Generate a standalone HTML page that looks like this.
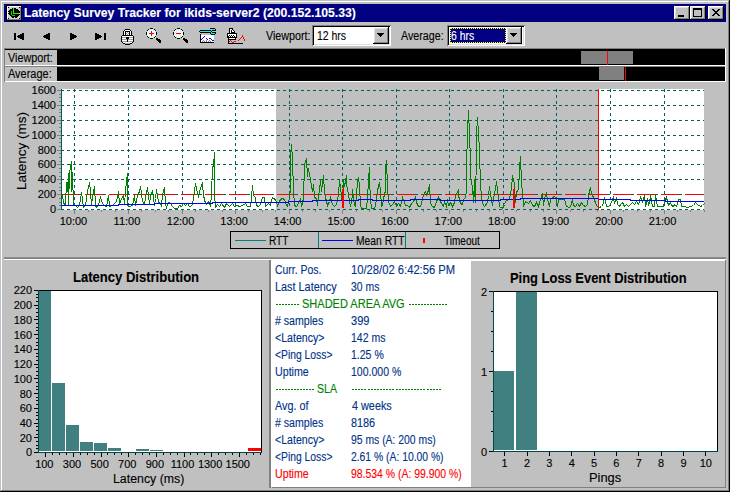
<!DOCTYPE html><html><head><meta charset="utf-8"><style>html,body{margin:0;padding:0;width:730px;height:492px;overflow:hidden;background:#c0c0c0;}body{position:relative;font-family:"Liberation Sans",sans-serif;}body>div,body>svg{position:absolute;}.t{white-space:nowrap;-webkit-text-stroke:0.12px currentColor;}svg{shape-rendering:crispEdges;}</style></head><body><div style="left:0px;top:0px;width:730px;height:492px;background:#c0c0c0;"></div>
<div style="left:1px;top:1px;width:728px;height:1px;background:#fff;"></div>
<div style="left:1px;top:1px;width:1px;height:490px;background:#fff;"></div>
<div style="left:0px;top:491px;width:730px;height:1px;background:#000;"></div>
<div style="left:729px;top:0px;width:1px;height:492px;background:#000;"></div>
<div style="left:1px;top:490px;width:728px;height:1px;background:#808080;"></div>
<div style="left:728px;top:1px;width:1px;height:490px;background:#808080;"></div>
<div style="left:4px;top:4px;width:722px;height:18px;background:#000080;"></div>
<svg style="left:6px;top:5px;" width="16" height="16" viewBox="0 0 16 16"><rect x="0" y="0" width="16" height="1" fill="#000"/><rect x="0" y="1" width="1" height="1" fill="#000"/><rect x="1" y="1" width="14" height="1" fill="#ffffff"/><rect x="15" y="1" width="1" height="1" fill="#000"/><rect x="0" y="2" width="1" height="1" fill="#000"/><rect x="1" y="2" width="1" height="1" fill="#ffffff"/><rect x="2" y="2" width="1" height="1" fill="#000"/><rect x="3" y="2" width="10" height="1" fill="#d0d0d0"/><rect x="13" y="2" width="1" height="1" fill="#000"/><rect x="14" y="2" width="1" height="1" fill="#808080"/><rect x="15" y="2" width="1" height="1" fill="#000"/><rect x="0" y="3" width="1" height="1" fill="#000"/><rect x="1" y="3" width="1" height="1" fill="#ffffff"/><rect x="2" y="3" width="4" height="1" fill="#d0d0d0"/><rect x="6" y="3" width="4" height="1" fill="#000"/><rect x="10" y="3" width="4" height="1" fill="#d0d0d0"/><rect x="14" y="3" width="1" height="1" fill="#808080"/><rect x="15" y="3" width="1" height="1" fill="#000"/><rect x="0" y="4" width="1" height="1" fill="#000"/><rect x="1" y="4" width="1" height="1" fill="#ffffff"/><rect x="2" y="4" width="2" height="1" fill="#d0d0d0"/><rect x="4" y="4" width="8" height="1" fill="#000"/><rect x="12" y="4" width="2" height="1" fill="#d0d0d0"/><rect x="14" y="4" width="1" height="1" fill="#808080"/><rect x="15" y="4" width="1" height="1" fill="#000"/><rect x="0" y="5" width="1" height="1" fill="#000"/><rect x="1" y="5" width="1" height="1" fill="#ffffff"/><rect x="2" y="5" width="1" height="1" fill="#d0d0d0"/><rect x="3" y="5" width="10" height="1" fill="#000"/><rect x="13" y="5" width="1" height="1" fill="#d0d0d0"/><rect x="14" y="5" width="1" height="1" fill="#808080"/><rect x="15" y="5" width="1" height="1" fill="#000"/><rect x="0" y="6" width="1" height="1" fill="#000"/><rect x="1" y="6" width="1" height="1" fill="#ffffff"/><rect x="2" y="6" width="12" height="1" fill="#000"/><rect x="14" y="6" width="1" height="1" fill="#808080"/><rect x="15" y="6" width="1" height="1" fill="#000"/><rect x="0" y="7" width="1" height="1" fill="#000"/><rect x="1" y="7" width="1" height="1" fill="#ffffff"/><rect x="2" y="7" width="1" height="1" fill="#d0d0d0"/><rect x="3" y="7" width="11" height="1" fill="#000"/><rect x="14" y="7" width="1" height="1" fill="#808080"/><rect x="15" y="7" width="1" height="1" fill="#000"/><rect x="0" y="8" width="1" height="1" fill="#000"/><rect x="1" y="8" width="1" height="1" fill="#ffffff"/><rect x="2" y="8" width="11" height="1" fill="#000"/><rect x="13" y="8" width="1" height="1" fill="#d0d0d0"/><rect x="14" y="8" width="1" height="1" fill="#808080"/><rect x="15" y="8" width="1" height="1" fill="#000"/><rect x="0" y="9" width="1" height="1" fill="#000"/><rect x="1" y="9" width="1" height="1" fill="#ffffff"/><rect x="2" y="9" width="1" height="1" fill="#d0d0d0"/><rect x="3" y="9" width="11" height="1" fill="#000"/><rect x="14" y="9" width="1" height="1" fill="#808080"/><rect x="15" y="9" width="1" height="1" fill="#000"/><rect x="0" y="10" width="1" height="1" fill="#000"/><rect x="1" y="10" width="1" height="1" fill="#ffffff"/><rect x="2" y="10" width="2" height="1" fill="#d0d0d0"/><rect x="4" y="10" width="9" height="1" fill="#000"/><rect x="13" y="10" width="1" height="1" fill="#d0d0d0"/><rect x="14" y="10" width="1" height="1" fill="#808080"/><rect x="15" y="10" width="1" height="1" fill="#000"/><rect x="0" y="11" width="1" height="1" fill="#000"/><rect x="1" y="11" width="1" height="1" fill="#ffffff"/><rect x="2" y="11" width="3" height="1" fill="#d0d0d0"/><rect x="5" y="11" width="7" height="1" fill="#000"/><rect x="12" y="11" width="2" height="1" fill="#d0d0d0"/><rect x="14" y="11" width="1" height="1" fill="#808080"/><rect x="15" y="11" width="1" height="1" fill="#000"/><rect x="0" y="12" width="1" height="1" fill="#000"/><rect x="1" y="12" width="1" height="1" fill="#ffffff"/><rect x="2" y="12" width="4" height="1" fill="#d0d0d0"/><rect x="6" y="12" width="2" height="1" fill="#000"/><rect x="8" y="12" width="1" height="1" fill="#d0d0d0"/><rect x="9" y="12" width="2" height="1" fill="#000"/><rect x="11" y="12" width="3" height="1" fill="#d0d0d0"/><rect x="14" y="12" width="1" height="1" fill="#808080"/><rect x="15" y="12" width="1" height="1" fill="#000"/><rect x="0" y="13" width="1" height="1" fill="#000"/><rect x="1" y="13" width="1" height="1" fill="#ffffff"/><rect x="2" y="13" width="1" height="1" fill="#000"/><rect x="3" y="13" width="10" height="1" fill="#d0d0d0"/><rect x="13" y="13" width="1" height="1" fill="#000"/><rect x="14" y="13" width="1" height="1" fill="#808080"/><rect x="15" y="13" width="1" height="1" fill="#000"/><rect x="0" y="14" width="1" height="1" fill="#000"/><rect x="1" y="14" width="14" height="1" fill="#808080"/><rect x="15" y="14" width="1" height="1" fill="#000"/><rect x="0" y="15" width="16" height="1" fill="#000"/><rect x="7" y="3" width="1" height="6" fill="#00ff00"/><rect x="7" y="8" width="6" height="1" fill="#00ff00"/><rect x="5" y="6" width="1" height="4" fill="#00d000"/><rect x="6" y="10" width="3" height="1" fill="#00d000"/></svg>
<div class="t" style="top:6.00px;font-size:12px;line-height:14px;color:#fff;font-weight:bold;left:24.18px;transform:scaleX(1.0175);transform-origin:0 0;">Latency Survey Tracker for ikids-server2 (200.152.105.33)</div>
<div style="left:674px;top:6px;width:16px;height:14px;background:#c0c0c0;box-shadow:inset -1px -1px #000,inset 1px 1px #fff,inset -2px -2px #808080,inset 2px 2px #dfdfdf;"></div>
<div style="left:690px;top:6px;width:16px;height:14px;background:#c0c0c0;box-shadow:inset -1px -1px #000,inset 1px 1px #fff,inset -2px -2px #808080,inset 2px 2px #dfdfdf;"></div>
<div style="left:708px;top:6px;width:16px;height:14px;background:#c0c0c0;box-shadow:inset -1px -1px #000,inset 1px 1px #fff,inset -2px -2px #808080,inset 2px 2px #dfdfdf;"></div>
<div style="left:678px;top:15px;width:6px;height:2px;background:#000;"></div>
<div style="left:693px;top:8px;width:9px;height:9px;background:transparent;box-shadow:inset 0 2px #000,inset 1px 0 #000,inset -1px 0 #000,inset 0 -1px #000;"></div>
<svg style="left:708px;top:6px;" width="16" height="14" viewBox="0 0 16 14"><rect x="4" y="3" width="2" height="1" fill="#000"/><rect x="10" y="3" width="2" height="1" fill="#000"/><rect x="5" y="4" width="2" height="1" fill="#000"/><rect x="9" y="4" width="2" height="1" fill="#000"/><rect x="6" y="5" width="4" height="1" fill="#000"/><rect x="7" y="6" width="2" height="1" fill="#000"/><rect x="6" y="7" width="4" height="1" fill="#000"/><rect x="5" y="8" width="2" height="1" fill="#000"/><rect x="9" y="8" width="2" height="1" fill="#000"/><rect x="4" y="9" width="2" height="1" fill="#000"/><rect x="10" y="9" width="2" height="1" fill="#000"/></svg>
<svg style="left:0px;top:0px;" width="260" height="48" viewBox="0 0 260 48"><rect x="14" y="33" width="2" height="7" fill="#000"/><rect x="17" y="36" width="1" height="1" fill="#000"/><rect x="18" y="35" width="2" height="3" fill="#000"/><rect x="20" y="34" width="2" height="5" fill="#000"/><rect x="22" y="33" width="2" height="7" fill="#000"/><rect x="43" y="36" width="1" height="1" fill="#000"/><rect x="44" y="35" width="2" height="3" fill="#000"/><rect x="46" y="34" width="2" height="5" fill="#000"/><rect x="48" y="33" width="2" height="7" fill="#000"/><rect x="70" y="33" width="2" height="7" fill="#000"/><rect x="72" y="34" width="2" height="5" fill="#000"/><rect x="74" y="35" width="2" height="3" fill="#000"/><rect x="76" y="36" width="1" height="1" fill="#000"/><rect x="95" y="33" width="2" height="7" fill="#000"/><rect x="97" y="34" width="2" height="5" fill="#000"/><rect x="99" y="35" width="2" height="3" fill="#000"/><rect x="101" y="36" width="1" height="1" fill="#000"/><rect x="104" y="33" width="2" height="7" fill="#000"/><rect x="125" y="29" width="5" height="1" fill="#000"/><rect x="124" y="30" width="1" height="1" fill="#000"/><rect x="125" y="30" width="5" height="1" fill="#fff"/><rect x="130" y="30" width="1" height="1" fill="#000"/><rect x="123" y="31" width="1" height="1" fill="#000"/><rect x="124" y="31" width="1" height="1" fill="#fff"/><rect x="125" y="31" width="5" height="1" fill="#000"/><rect x="130" y="31" width="1" height="1" fill="#fff"/><rect x="131" y="31" width="1" height="1" fill="#000"/><rect x="123" y="32" width="1" height="1" fill="#000"/><rect x="124" y="32" width="1" height="1" fill="#fff"/><rect x="125" y="32" width="1" height="1" fill="#000"/><rect x="126" y="32" width="1" height="1" fill="#fff"/><rect x="127" y="32" width="1" height="1" fill="#a0a0a0"/><rect x="128" y="32" width="1" height="1" fill="#fff"/><rect x="129" y="32" width="1" height="1" fill="#000"/><rect x="130" y="32" width="1" height="1" fill="#fff"/><rect x="131" y="32" width="1" height="1" fill="#000"/><rect x="123" y="33" width="1" height="1" fill="#000"/><rect x="124" y="33" width="1" height="1" fill="#fff"/><rect x="125" y="33" width="1" height="1" fill="#000"/><rect x="126" y="33" width="1" height="1" fill="#a0a0a0"/><rect x="127" y="33" width="1" height="1" fill="#fff"/><rect x="128" y="33" width="1" height="1" fill="#a0a0a0"/><rect x="129" y="33" width="1" height="1" fill="#000"/><rect x="130" y="33" width="1" height="1" fill="#fff"/><rect x="131" y="33" width="1" height="1" fill="#000"/><rect x="123" y="34" width="1" height="1" fill="#000"/><rect x="124" y="34" width="1" height="1" fill="#fff"/><rect x="125" y="34" width="1" height="1" fill="#000"/><rect x="126" y="34" width="1" height="1" fill="#fff"/><rect x="127" y="34" width="1" height="1" fill="#a0a0a0"/><rect x="128" y="34" width="1" height="1" fill="#fff"/><rect x="129" y="34" width="1" height="1" fill="#000"/><rect x="130" y="34" width="1" height="1" fill="#fff"/><rect x="131" y="34" width="1" height="1" fill="#000"/><rect x="122" y="35" width="11" height="1" fill="#000"/><rect x="121" y="36" width="1" height="1" fill="#000"/><rect x="122" y="36" width="11" height="1" fill="#fff"/><rect x="133" y="36" width="1" height="1" fill="#000"/><rect x="121" y="37" width="1" height="1" fill="#000"/><rect x="122" y="37" width="4" height="1" fill="#a0a0a0"/><rect x="126" y="37" width="3" height="1" fill="#000"/><rect x="129" y="37" width="4" height="1" fill="#a0a0a0"/><rect x="133" y="37" width="1" height="1" fill="#000"/><rect x="121" y="38" width="1" height="1" fill="#000"/><rect x="122" y="38" width="4" height="1" fill="#fff"/><rect x="126" y="38" width="3" height="1" fill="#000"/><rect x="129" y="38" width="4" height="1" fill="#fff"/><rect x="133" y="38" width="1" height="1" fill="#000"/><rect x="121" y="39" width="1" height="1" fill="#000"/><rect x="122" y="39" width="5" height="1" fill="#a0a0a0"/><rect x="127" y="39" width="1" height="1" fill="#000"/><rect x="128" y="39" width="5" height="1" fill="#a0a0a0"/><rect x="133" y="39" width="1" height="1" fill="#000"/><rect x="121" y="40" width="1" height="1" fill="#000"/><rect x="122" y="40" width="5" height="1" fill="#fff"/><rect x="127" y="40" width="1" height="1" fill="#000"/><rect x="128" y="40" width="5" height="1" fill="#fff"/><rect x="133" y="40" width="1" height="1" fill="#000"/><rect x="121" y="41" width="1" height="1" fill="#000"/><rect x="122" y="41" width="5" height="1" fill="#a0a0a0"/><rect x="127" y="41" width="1" height="1" fill="#000"/><rect x="128" y="41" width="5" height="1" fill="#a0a0a0"/><rect x="133" y="41" width="1" height="1" fill="#000"/><rect x="122" y="42" width="1" height="1" fill="#000"/><rect x="123" y="42" width="9" height="1" fill="#fff"/><rect x="132" y="42" width="1" height="1" fill="#000"/><rect x="123" y="43" width="2" height="1" fill="#000"/><rect x="125" y="43" width="5" height="1" fill="#a0a0a0"/><rect x="130" y="43" width="2" height="1" fill="#000"/><rect x="125" y="44" width="5" height="1" fill="#000"/><rect x="150" y="28" width="3" height="1" fill="#000"/><rect x="148" y="29" width="1" height="1" fill="#000"/><rect x="150" y="29" width="1" height="1" fill="#fff"/><rect x="151" y="29" width="1" height="1" fill="#c8f8f8"/><rect x="152" y="29" width="1" height="1" fill="#fff"/><rect x="154" y="29" width="1" height="1" fill="#000"/><rect x="147" y="30" width="1" height="1" fill="#000"/><rect x="148" y="30" width="1" height="1" fill="#fff"/><rect x="149" y="30" width="1" height="1" fill="#c8f8f8"/><rect x="150" y="30" width="1" height="1" fill="#fff"/><rect x="151" y="30" width="1" height="1" fill="#c8f8f8"/><rect x="152" y="30" width="1" height="1" fill="#fff"/><rect x="153" y="30" width="1" height="1" fill="#c8f8f8"/><rect x="154" y="30" width="1" height="1" fill="#fff"/><rect x="155" y="30" width="1" height="1" fill="#000"/><rect x="147" y="31" width="1" height="1" fill="#c8f8f8"/><rect x="148" y="31" width="1" height="1" fill="#fff"/><rect x="149" y="31" width="1" height="1" fill="#c8f8f8"/><rect x="150" y="31" width="1" height="1" fill="#fff"/><rect x="151" y="31" width="1" height="1" fill="#ff0000"/><rect x="152" y="31" width="1" height="1" fill="#fff"/><rect x="153" y="31" width="1" height="1" fill="#c8f8f8"/><rect x="154" y="31" width="1" height="1" fill="#fff"/><rect x="155" y="31" width="1" height="1" fill="#c8f8f8"/><rect x="146" y="32" width="1" height="1" fill="#000"/><rect x="147" y="32" width="1" height="1" fill="#fff"/><rect x="148" y="32" width="1" height="1" fill="#c8f8f8"/><rect x="149" y="32" width="1" height="1" fill="#fff"/><rect x="150" y="32" width="1" height="1" fill="#c8f8f8"/><rect x="151" y="32" width="1" height="1" fill="#ff0000"/><rect x="152" y="32" width="1" height="1" fill="#c8f8f8"/><rect x="153" y="32" width="1" height="1" fill="#fff"/><rect x="154" y="32" width="1" height="1" fill="#c8f8f8"/><rect x="155" y="32" width="1" height="1" fill="#fff"/><rect x="156" y="32" width="1" height="1" fill="#000"/><rect x="146" y="33" width="1" height="1" fill="#000"/><rect x="147" y="33" width="1" height="1" fill="#c8f8f8"/><rect x="148" y="33" width="1" height="1" fill="#fff"/><rect x="149" y="33" width="5" height="1" fill="#ff0000"/><rect x="154" y="33" width="1" height="1" fill="#fff"/><rect x="155" y="33" width="1" height="1" fill="#c8f8f8"/><rect x="156" y="33" width="1" height="1" fill="#000"/><rect x="146" y="34" width="1" height="1" fill="#000"/><rect x="147" y="34" width="1" height="1" fill="#fff"/><rect x="148" y="34" width="1" height="1" fill="#c8f8f8"/><rect x="149" y="34" width="1" height="1" fill="#fff"/><rect x="150" y="34" width="1" height="1" fill="#c8f8f8"/><rect x="151" y="34" width="1" height="1" fill="#ff0000"/><rect x="152" y="34" width="1" height="1" fill="#c8f8f8"/><rect x="153" y="34" width="1" height="1" fill="#fff"/><rect x="154" y="34" width="1" height="1" fill="#c8f8f8"/><rect x="155" y="34" width="1" height="1" fill="#fff"/><rect x="156" y="34" width="1" height="1" fill="#000"/><rect x="147" y="35" width="1" height="1" fill="#c8f8f8"/><rect x="148" y="35" width="1" height="1" fill="#fff"/><rect x="149" y="35" width="1" height="1" fill="#c8f8f8"/><rect x="150" y="35" width="1" height="1" fill="#fff"/><rect x="151" y="35" width="1" height="1" fill="#ff0000"/><rect x="152" y="35" width="1" height="1" fill="#fff"/><rect x="153" y="35" width="1" height="1" fill="#c8f8f8"/><rect x="154" y="35" width="1" height="1" fill="#fff"/><rect x="155" y="35" width="1" height="1" fill="#c8f8f8"/><rect x="147" y="36" width="1" height="1" fill="#000"/><rect x="148" y="36" width="1" height="1" fill="#fff"/><rect x="149" y="36" width="1" height="1" fill="#c8f8f8"/><rect x="150" y="36" width="1" height="1" fill="#fff"/><rect x="151" y="36" width="1" height="1" fill="#c8f8f8"/><rect x="152" y="36" width="1" height="1" fill="#fff"/><rect x="153" y="36" width="1" height="1" fill="#c8f8f8"/><rect x="154" y="36" width="1" height="1" fill="#fff"/><rect x="155" y="36" width="1" height="1" fill="#000"/><rect x="148" y="37" width="1" height="1" fill="#000"/><rect x="150" y="37" width="1" height="1" fill="#fff"/><rect x="151" y="37" width="1" height="1" fill="#c8f8f8"/><rect x="152" y="37" width="1" height="1" fill="#fff"/><rect x="154" y="37" width="1" height="1" fill="#000"/><rect x="155" y="37" width="1" height="1" fill="#ffff00"/><rect x="150" y="38" width="3" height="1" fill="#000"/><rect x="155" y="38" width="1" height="1" fill="#ffff00"/><rect x="156" y="38" width="2" height="1" fill="#000"/><rect x="156" y="39" width="4" height="1" fill="#000"/><rect x="157" y="40" width="4" height="1" fill="#000"/><rect x="158" y="41" width="3" height="1" fill="#000"/><rect x="159" y="42" width="2" height="1" fill="#000"/><rect x="177" y="28" width="3" height="1" fill="#000"/><rect x="175" y="29" width="1" height="1" fill="#000"/><rect x="177" y="29" width="1" height="1" fill="#fff"/><rect x="178" y="29" width="1" height="1" fill="#c8f8f8"/><rect x="179" y="29" width="1" height="1" fill="#fff"/><rect x="181" y="29" width="1" height="1" fill="#000"/><rect x="174" y="30" width="1" height="1" fill="#000"/><rect x="175" y="30" width="1" height="1" fill="#fff"/><rect x="176" y="30" width="1" height="1" fill="#c8f8f8"/><rect x="177" y="30" width="1" height="1" fill="#fff"/><rect x="178" y="30" width="1" height="1" fill="#c8f8f8"/><rect x="179" y="30" width="1" height="1" fill="#fff"/><rect x="180" y="30" width="1" height="1" fill="#c8f8f8"/><rect x="181" y="30" width="1" height="1" fill="#fff"/><rect x="182" y="30" width="1" height="1" fill="#000"/><rect x="174" y="31" width="1" height="1" fill="#c8f8f8"/><rect x="175" y="31" width="1" height="1" fill="#fff"/><rect x="176" y="31" width="1" height="1" fill="#c8f8f8"/><rect x="177" y="31" width="3" height="1" fill="#fff"/><rect x="180" y="31" width="1" height="1" fill="#c8f8f8"/><rect x="181" y="31" width="1" height="1" fill="#fff"/><rect x="182" y="31" width="1" height="1" fill="#c8f8f8"/><rect x="173" y="32" width="1" height="1" fill="#000"/><rect x="174" y="32" width="1" height="1" fill="#fff"/><rect x="175" y="32" width="1" height="1" fill="#c8f8f8"/><rect x="176" y="32" width="1" height="1" fill="#fff"/><rect x="177" y="32" width="1" height="1" fill="#c8f8f8"/><rect x="178" y="32" width="1" height="1" fill="#fff"/><rect x="179" y="32" width="1" height="1" fill="#c8f8f8"/><rect x="180" y="32" width="1" height="1" fill="#fff"/><rect x="181" y="32" width="1" height="1" fill="#c8f8f8"/><rect x="182" y="32" width="1" height="1" fill="#fff"/><rect x="183" y="32" width="1" height="1" fill="#000"/><rect x="173" y="33" width="1" height="1" fill="#000"/><rect x="174" y="33" width="1" height="1" fill="#c8f8f8"/><rect x="175" y="33" width="1" height="1" fill="#fff"/><rect x="176" y="33" width="5" height="1" fill="#ff0000"/><rect x="181" y="33" width="1" height="1" fill="#fff"/><rect x="182" y="33" width="1" height="1" fill="#c8f8f8"/><rect x="183" y="33" width="1" height="1" fill="#000"/><rect x="173" y="34" width="1" height="1" fill="#000"/><rect x="174" y="34" width="1" height="1" fill="#fff"/><rect x="175" y="34" width="1" height="1" fill="#c8f8f8"/><rect x="176" y="34" width="1" height="1" fill="#fff"/><rect x="177" y="34" width="1" height="1" fill="#c8f8f8"/><rect x="178" y="34" width="1" height="1" fill="#fff"/><rect x="179" y="34" width="1" height="1" fill="#c8f8f8"/><rect x="180" y="34" width="1" height="1" fill="#fff"/><rect x="181" y="34" width="1" height="1" fill="#c8f8f8"/><rect x="182" y="34" width="1" height="1" fill="#fff"/><rect x="183" y="34" width="1" height="1" fill="#000"/><rect x="174" y="35" width="1" height="1" fill="#c8f8f8"/><rect x="175" y="35" width="1" height="1" fill="#fff"/><rect x="176" y="35" width="1" height="1" fill="#c8f8f8"/><rect x="177" y="35" width="3" height="1" fill="#fff"/><rect x="180" y="35" width="1" height="1" fill="#c8f8f8"/><rect x="181" y="35" width="1" height="1" fill="#fff"/><rect x="182" y="35" width="1" height="1" fill="#c8f8f8"/><rect x="174" y="36" width="1" height="1" fill="#000"/><rect x="175" y="36" width="1" height="1" fill="#fff"/><rect x="176" y="36" width="1" height="1" fill="#c8f8f8"/><rect x="177" y="36" width="1" height="1" fill="#fff"/><rect x="178" y="36" width="1" height="1" fill="#c8f8f8"/><rect x="179" y="36" width="1" height="1" fill="#fff"/><rect x="180" y="36" width="1" height="1" fill="#c8f8f8"/><rect x="181" y="36" width="1" height="1" fill="#fff"/><rect x="182" y="36" width="1" height="1" fill="#000"/><rect x="175" y="37" width="1" height="1" fill="#000"/><rect x="177" y="37" width="1" height="1" fill="#fff"/><rect x="178" y="37" width="1" height="1" fill="#c8f8f8"/><rect x="179" y="37" width="1" height="1" fill="#fff"/><rect x="181" y="37" width="1" height="1" fill="#000"/><rect x="182" y="37" width="1" height="1" fill="#ffff00"/><rect x="177" y="38" width="3" height="1" fill="#000"/><rect x="182" y="38" width="1" height="1" fill="#ffff00"/><rect x="183" y="38" width="2" height="1" fill="#000"/><rect x="183" y="39" width="4" height="1" fill="#000"/><rect x="184" y="40" width="4" height="1" fill="#000"/><rect x="185" y="41" width="3" height="1" fill="#000"/><rect x="186" y="42" width="2" height="1" fill="#000"/><rect x="210" y="28" width="5" height="1" fill="#000"/><rect x="211" y="29" width="4" height="1" fill="#00ffff"/><rect x="215" y="29" width="1" height="1" fill="#000"/><rect x="200" y="30" width="11" height="1" fill="#000"/><rect x="211" y="30" width="1" height="1" fill="#00ffff"/><rect x="212" y="30" width="4" height="1" fill="#000"/><rect x="199" y="31" width="1" height="1" fill="#000"/><rect x="200" y="31" width="11" height="1" fill="#00ffff"/><rect x="211" y="31" width="1" height="1" fill="#000"/><rect x="200" y="32" width="11" height="1" fill="#000"/><rect x="211" y="32" width="1" height="1" fill="#00ffff"/><rect x="212" y="32" width="4" height="1" fill="#000"/><rect x="210" y="33" width="1" height="1" fill="#000"/><rect x="211" y="33" width="4" height="1" fill="#00ffff"/><rect x="215" y="33" width="1" height="1" fill="#000"/><rect x="200" y="34" width="1" height="1" fill="#000"/><rect x="211" y="34" width="4" height="1" fill="#000"/><rect x="200" y="35" width="1" height="1" fill="#000"/><rect x="201" y="35" width="13" height="1" fill="#fff"/><rect x="200" y="36" width="1" height="1" fill="#000"/><rect x="201" y="36" width="3" height="1" fill="#fff"/><rect x="204" y="36" width="1" height="1" fill="#0000ff"/><rect x="205" y="36" width="9" height="1" fill="#fff"/><rect x="200" y="37" width="1" height="1" fill="#000"/><rect x="201" y="37" width="2" height="1" fill="#fff"/><rect x="203" y="37" width="1" height="1" fill="#0000ff"/><rect x="204" y="37" width="10" height="1" fill="#fff"/><rect x="200" y="38" width="1" height="1" fill="#000"/><rect x="201" y="38" width="1" height="1" fill="#fff"/><rect x="202" y="38" width="1" height="1" fill="#0000ff"/><rect x="203" y="38" width="3" height="1" fill="#fff"/><rect x="206" y="38" width="1" height="1" fill="#0000ff"/><rect x="207" y="38" width="2" height="1" fill="#fff"/><rect x="209" y="38" width="2" height="1" fill="#0000ff"/><rect x="211" y="38" width="3" height="1" fill="#fff"/><rect x="200" y="39" width="1" height="1" fill="#000"/><rect x="201" y="39" width="1" height="1" fill="#0000ff"/><rect x="202" y="39" width="5" height="1" fill="#fff"/><rect x="207" y="39" width="1" height="1" fill="#0000ff"/><rect x="208" y="39" width="3" height="1" fill="#fff"/><rect x="211" y="39" width="1" height="1" fill="#0000ff"/><rect x="212" y="39" width="2" height="1" fill="#fff"/><rect x="200" y="40" width="1" height="1" fill="#000"/><rect x="201" y="40" width="2" height="1" fill="#fff"/><rect x="203" y="40" width="1" height="1" fill="#808080"/><rect x="204" y="40" width="2" height="1" fill="#fff"/><rect x="206" y="40" width="1" height="1" fill="#808080"/><rect x="207" y="40" width="2" height="1" fill="#fff"/><rect x="209" y="40" width="1" height="1" fill="#808080"/><rect x="210" y="40" width="2" height="1" fill="#fff"/><rect x="212" y="40" width="2" height="1" fill="#0000ff"/><rect x="200" y="41" width="1" height="1" fill="#000"/><rect x="201" y="41" width="1" height="1" fill="#fff"/><rect x="202" y="41" width="1" height="1" fill="#808080"/><rect x="203" y="41" width="1" height="1" fill="#fff"/><rect x="204" y="41" width="1" height="1" fill="#808080"/><rect x="205" y="41" width="1" height="1" fill="#fff"/><rect x="206" y="41" width="1" height="1" fill="#808080"/><rect x="207" y="41" width="1" height="1" fill="#fff"/><rect x="208" y="41" width="1" height="1" fill="#808080"/><rect x="209" y="41" width="1" height="1" fill="#fff"/><rect x="210" y="41" width="1" height="1" fill="#808080"/><rect x="211" y="41" width="3" height="1" fill="#fff"/><rect x="200" y="42" width="14" height="1" fill="#000"/><rect x="229" y="28" width="4" height="1" fill="#000"/><rect x="229" y="29" width="1" height="1" fill="#000"/><rect x="230" y="29" width="2" height="1" fill="#fff"/><rect x="232" y="29" width="1" height="1" fill="#000"/><rect x="229" y="30" width="1" height="1" fill="#000"/><rect x="230" y="30" width="1" height="1" fill="#fff"/><rect x="231" y="30" width="1" height="1" fill="#000"/><rect x="232" y="30" width="1" height="1" fill="#fff"/><rect x="233" y="30" width="1" height="1" fill="#000"/><rect x="229" y="31" width="1" height="1" fill="#000"/><rect x="230" y="31" width="1" height="1" fill="#fff"/><rect x="231" y="31" width="1" height="1" fill="#000"/><rect x="232" y="31" width="2" height="1" fill="#fff"/><rect x="234" y="31" width="1" height="1" fill="#000"/><rect x="229" y="32" width="1" height="1" fill="#000"/><rect x="230" y="32" width="1" height="1" fill="#fff"/><rect x="231" y="32" width="4" height="1" fill="#000"/><rect x="227" y="33" width="10" height="1" fill="#000"/><rect x="227" y="34" width="1" height="1" fill="#000"/><rect x="228" y="34" width="8" height="1" fill="#fff"/><rect x="236" y="34" width="1" height="1" fill="#000"/><rect x="227" y="35" width="1" height="1" fill="#000"/><rect x="228" y="35" width="1" height="1" fill="#fff"/><rect x="229" y="35" width="1" height="1" fill="#000"/><rect x="230" y="35" width="1" height="1" fill="#fff"/><rect x="231" y="35" width="1" height="1" fill="#000"/><rect x="232" y="35" width="1" height="1" fill="#fff"/><rect x="233" y="35" width="1" height="1" fill="#000"/><rect x="234" y="35" width="2" height="1" fill="#fff"/><rect x="236" y="35" width="1" height="1" fill="#000"/><rect x="242" y="35" width="1" height="1" fill="#ff0000"/><rect x="227" y="36" width="2" height="1" fill="#000"/><rect x="229" y="36" width="1" height="1" fill="#fff"/><rect x="230" y="36" width="1" height="1" fill="#000"/><rect x="231" y="36" width="1" height="1" fill="#fff"/><rect x="232" y="36" width="1" height="1" fill="#000"/><rect x="233" y="36" width="1" height="1" fill="#fff"/><rect x="234" y="36" width="1" height="1" fill="#000"/><rect x="235" y="36" width="1" height="1" fill="#fff"/><rect x="236" y="36" width="1" height="1" fill="#000"/><rect x="242" y="36" width="1" height="1" fill="#ff0000"/><rect x="227" y="37" width="10" height="1" fill="#000"/><rect x="241" y="37" width="1" height="1" fill="#ff0000"/><rect x="243" y="37" width="1" height="1" fill="#ff0000"/><rect x="228" y="38" width="1" height="1" fill="#000"/><rect x="229" y="38" width="6" height="1" fill="#fff"/><rect x="235" y="38" width="1" height="1" fill="#000"/><rect x="240" y="38" width="1" height="1" fill="#ff0000"/><rect x="243" y="38" width="1" height="1" fill="#ff0000"/><rect x="228" y="39" width="8" height="1" fill="#000"/><rect x="239" y="39" width="1" height="1" fill="#ff0000"/><rect x="244" y="39" width="1" height="1" fill="#ff0000"/><rect x="228" y="40" width="1" height="1" fill="#000"/><rect x="230" y="40" width="1" height="1" fill="#ff0000"/><rect x="238" y="40" width="1" height="1" fill="#ff0000"/><rect x="244" y="40" width="1" height="1" fill="#ff0000"/><rect x="228" y="41" width="1" height="1" fill="#000"/><rect x="229" y="41" width="1" height="1" fill="#ff0000"/><rect x="231" y="41" width="1" height="1" fill="#ff0000"/><rect x="234" y="41" width="2" height="1" fill="#ff0000"/><rect x="228" y="42" width="1" height="1" fill="#000"/><rect x="232" y="42" width="2" height="1" fill="#ff0000"/><rect x="228" y="43" width="15" height="1" fill="#000"/></svg>
<div class="t" style="top:29.00px;font-size:12px;line-height:14px;color:#000;font-weight:normal;left:265.75px;transform:scaleX(0.8940);transform-origin:0 0;">Viewport:</div>
<div style="left:312px;top:25px;width:79px;height:21px;background:#fff;box-shadow:inset 1px 1px #808080,inset -1px -1px #fff,inset 2px 2px #000,inset -2px -2px #dfdfdf;"></div>
<div class="t" style="top:29.00px;font-size:12px;line-height:14px;color:#000;font-weight:normal;left:317.12px;transform:scaleX(0.8708);transform-origin:0 0;">12 hrs</div>
<div style="left:373px;top:27px;width:16px;height:17px;background:#c0c0c0;box-shadow:inset -1px -1px #000,inset 1px 1px #fff,inset -2px -2px #808080,inset 2px 2px #dfdfdf;"></div>
<svg style="left:373px;top:27px;" width="16" height="17" viewBox="0 0 16 17"><path d="M4 6h7v1h-7zM5 7h5v1h-5zM6 8h3v1h-3zM7 9h1v1h-1z" fill="#000"/></svg>
<div class="t" style="top:29.00px;font-size:12px;line-height:14px;color:#000;font-weight:normal;left:400.97px;transform:scaleX(0.8927);transform-origin:0 0;">Average:</div>
<div style="left:447px;top:25px;width:78px;height:21px;background:#fff;box-shadow:inset 1px 1px #808080,inset -1px -1px #fff,inset 2px 2px #000,inset -2px -2px #dfdfdf;"></div>
<div style="left:450px;top:28px;width:56px;height:15px;background:#000080;outline:1px dotted #ffff00;outline-offset:-1px;"></div>
<div class="t" style="top:29.00px;font-size:12px;line-height:14px;color:#fff;font-weight:normal;left:451.48px;transform:scaleX(0.8655);transform-origin:0 0;">6 hrs</div>
<div style="left:506px;top:27px;width:16px;height:17px;background:#c0c0c0;box-shadow:inset -1px -1px #000,inset 1px 1px #fff,inset -2px -2px #808080,inset 2px 2px #dfdfdf;"></div>
<svg style="left:506px;top:27px;" width="16" height="17" viewBox="0 0 16 17"><path d="M4 6h7v1h-7zM5 7h5v1h-5zM6 8h3v1h-3zM7 9h1v1h-1z" fill="#000"/></svg>
<div style="left:4px;top:48px;width:722px;height:1px;background:#808080;"></div>
<div style="left:5px;top:49px;width:720px;height:1px;background:#000;"></div>
<div style="left:4px;top:48px;width:1px;height:34px;background:#808080;"></div>
<div style="left:57px;top:50px;width:668px;height:15px;background:#000;"></div>
<div style="left:5px;top:65px;width:721px;height:1px;background:#fff;"></div>
<div style="left:5px;top:66px;width:720px;height:1px;background:#808080;"></div>
<div style="left:57px;top:67px;width:668px;height:14px;background:#000;"></div>
<div style="left:5px;top:81px;width:721px;height:1px;background:#fff;"></div>
<div style="left:725px;top:48px;width:1px;height:34px;background:#fff;"></div>
<div class="t" style="top:51.00px;font-size:12px;line-height:14px;color:#000;font-weight:normal;left:7.65px;transform:scaleX(0.9001);transform-origin:0 0;">Viewport:</div>
<div class="t" style="top:67.00px;font-size:12px;line-height:14px;color:#000;font-weight:normal;left:7.67px;transform:scaleX(0.9142);transform-origin:0 0;">Average:</div>
<div style="left:581px;top:51px;width:52px;height:13px;background:#808080;"></div>
<div style="left:607px;top:51px;width:1px;height:14px;background:#ff0000;"></div>
<div style="left:599px;top:67px;width:25px;height:13px;background:#808080;"></div>
<div style="left:625px;top:67px;width:1px;height:14px;background:#ff0000;"></div>
<svg style="left:0px;top:0px" width="730" height="260" viewBox="0 0 730 260"><rect x="61" y="89" width="643" height="121" fill="#fff"/><rect x="276" y="89" width="323" height="121" fill="#c0c0c0"/><line x1="61" y1="194.5" x2="704" y2="194.5" stroke="#006060" stroke-dasharray="3 3"/><line x1="61" y1="179.5" x2="704" y2="179.5" stroke="#006060" stroke-dasharray="3 3"/><line x1="61" y1="164.5" x2="704" y2="164.5" stroke="#006060" stroke-dasharray="3 3"/><line x1="61" y1="150.5" x2="704" y2="150.5" stroke="#006060" stroke-dasharray="3 3"/><line x1="61" y1="135.5" x2="704" y2="135.5" stroke="#006060" stroke-dasharray="3 3"/><line x1="61" y1="120.5" x2="704" y2="120.5" stroke="#006060" stroke-dasharray="3 3"/><line x1="61" y1="105.5" x2="704" y2="105.5" stroke="#006060" stroke-dasharray="3 3"/><line x1="61" y1="90.5" x2="704" y2="90.5" stroke="#006060" stroke-dasharray="3 3"/><line x1="74.5" y1="89" x2="74.5" y2="209" stroke="#006060" stroke-dasharray="3 3"/><line x1="128.5" y1="89" x2="128.5" y2="209" stroke="#006060" stroke-dasharray="3 3"/><line x1="182.5" y1="89" x2="182.5" y2="209" stroke="#006060" stroke-dasharray="3 3"/><line x1="235.5" y1="89" x2="235.5" y2="209" stroke="#006060" stroke-dasharray="3 3"/><line x1="289.5" y1="89" x2="289.5" y2="209" stroke="#006060" stroke-dasharray="3 3"/><line x1="342.5" y1="89" x2="342.5" y2="209" stroke="#006060" stroke-dasharray="3 3"/><line x1="396.5" y1="89" x2="396.5" y2="209" stroke="#006060" stroke-dasharray="3 3"/><line x1="449.5" y1="89" x2="449.5" y2="209" stroke="#006060" stroke-dasharray="3 3"/><line x1="503.5" y1="89" x2="503.5" y2="209" stroke="#006060" stroke-dasharray="3 3"/><line x1="556.5" y1="89" x2="556.5" y2="209" stroke="#006060" stroke-dasharray="3 3"/><line x1="610.5" y1="89" x2="610.5" y2="209" stroke="#006060" stroke-dasharray="3 3"/><line x1="664.5" y1="89" x2="664.5" y2="209" stroke="#006060" stroke-dasharray="3 3"/><line x1="61" y1="209.5" x2="704" y2="209.5" stroke="#006060" stroke-dasharray="3 3"/><rect x="61" y="89" width="1" height="121" fill="#006060"/><rect x="57" y="209" width="4" height="1" fill="#808080"/><rect x="59" y="205" width="2" height="1" fill="#808080"/><rect x="59" y="202" width="2" height="1" fill="#808080"/><rect x="59" y="198" width="2" height="1" fill="#808080"/><rect x="57" y="194" width="4" height="1" fill="#808080"/><rect x="59" y="190" width="2" height="1" fill="#808080"/><rect x="59" y="187" width="2" height="1" fill="#808080"/><rect x="59" y="183" width="2" height="1" fill="#808080"/><rect x="57" y="179" width="4" height="1" fill="#808080"/><rect x="59" y="176" width="2" height="1" fill="#808080"/><rect x="59" y="172" width="2" height="1" fill="#808080"/><rect x="59" y="168" width="2" height="1" fill="#808080"/><rect x="57" y="164" width="4" height="1" fill="#808080"/><rect x="59" y="161" width="2" height="1" fill="#808080"/><rect x="59" y="157" width="2" height="1" fill="#808080"/><rect x="59" y="153" width="2" height="1" fill="#808080"/><rect x="57" y="150" width="4" height="1" fill="#808080"/><rect x="59" y="146" width="2" height="1" fill="#808080"/><rect x="59" y="142" width="2" height="1" fill="#808080"/><rect x="59" y="138" width="2" height="1" fill="#808080"/><rect x="57" y="135" width="4" height="1" fill="#808080"/><rect x="59" y="131" width="2" height="1" fill="#808080"/><rect x="59" y="127" width="2" height="1" fill="#808080"/><rect x="59" y="123" width="2" height="1" fill="#808080"/><rect x="57" y="120" width="4" height="1" fill="#808080"/><rect x="59" y="116" width="2" height="1" fill="#808080"/><rect x="59" y="112" width="2" height="1" fill="#808080"/><rect x="59" y="109" width="2" height="1" fill="#808080"/><rect x="57" y="105" width="4" height="1" fill="#808080"/><rect x="59" y="101" width="2" height="1" fill="#808080"/><rect x="59" y="97" width="2" height="1" fill="#808080"/><rect x="59" y="94" width="2" height="1" fill="#808080"/><rect x="57" y="90" width="4" height="1" fill="#808080"/><rect x="74" y="210" width="1" height="4" fill="#808080"/><rect x="88" y="210" width="1" height="2" fill="#808080"/><rect x="101" y="210" width="1" height="2" fill="#808080"/><rect x="115" y="210" width="1" height="2" fill="#808080"/><rect x="128" y="210" width="1" height="4" fill="#808080"/><rect x="141" y="210" width="1" height="2" fill="#808080"/><rect x="155" y="210" width="1" height="2" fill="#808080"/><rect x="168" y="210" width="1" height="2" fill="#808080"/><rect x="182" y="210" width="1" height="4" fill="#808080"/><rect x="195" y="210" width="1" height="2" fill="#808080"/><rect x="208" y="210" width="1" height="2" fill="#808080"/><rect x="222" y="210" width="1" height="2" fill="#808080"/><rect x="235" y="210" width="1" height="4" fill="#808080"/><rect x="248" y="210" width="1" height="2" fill="#808080"/><rect x="262" y="210" width="1" height="2" fill="#808080"/><rect x="275" y="210" width="1" height="2" fill="#808080"/><rect x="289" y="210" width="1" height="4" fill="#808080"/><rect x="302" y="210" width="1" height="2" fill="#808080"/><rect x="315" y="210" width="1" height="2" fill="#808080"/><rect x="329" y="210" width="1" height="2" fill="#808080"/><rect x="342" y="210" width="1" height="4" fill="#808080"/><rect x="356" y="210" width="1" height="2" fill="#808080"/><rect x="369" y="210" width="1" height="2" fill="#808080"/><rect x="382" y="210" width="1" height="2" fill="#808080"/><rect x="396" y="210" width="1" height="4" fill="#808080"/><rect x="409" y="210" width="1" height="2" fill="#808080"/><rect x="423" y="210" width="1" height="2" fill="#808080"/><rect x="436" y="210" width="1" height="2" fill="#808080"/><rect x="449" y="210" width="1" height="4" fill="#808080"/><rect x="463" y="210" width="1" height="2" fill="#808080"/><rect x="476" y="210" width="1" height="2" fill="#808080"/><rect x="489" y="210" width="1" height="2" fill="#808080"/><rect x="503" y="210" width="1" height="4" fill="#808080"/><rect x="516" y="210" width="1" height="2" fill="#808080"/><rect x="530" y="210" width="1" height="2" fill="#808080"/><rect x="543" y="210" width="1" height="2" fill="#808080"/><rect x="556" y="210" width="1" height="4" fill="#808080"/><rect x="570" y="210" width="1" height="2" fill="#808080"/><rect x="583" y="210" width="1" height="2" fill="#808080"/><rect x="597" y="210" width="1" height="2" fill="#808080"/><rect x="610" y="210" width="1" height="4" fill="#808080"/><rect x="623" y="210" width="1" height="2" fill="#808080"/><rect x="637" y="210" width="1" height="2" fill="#808080"/><rect x="650" y="210" width="1" height="2" fill="#808080"/><rect x="664" y="210" width="1" height="4" fill="#808080"/><rect x="677" y="210" width="1" height="2" fill="#808080"/><rect x="690" y="210" width="1" height="2" fill="#808080"/><rect x="704" y="210" width="1" height="2" fill="#808080"/><line x1="61" y1="194.5" x2="704" y2="194.5" stroke="#ff0000" stroke-dasharray="18 6"/><polyline points="62.5,194.5 63.5,203.5 65.5,204.5 66.5,182.5 67.5,191.5 68.5,173.5 68.5,205.5 69.5,173.5 71.5,161.5 71.5,191.5 72.5,172.5 73.5,205.5 75.5,205.5 77.5,207.5 79.5,205.5 81.5,192.5 83.5,207.5 85.5,205.5 87.5,191.5 89.5,182.5 90.5,191.5 91.5,205.5 92.5,196.5 94.5,186.5 95.5,205.5 96.5,207.5 98.5,204.5 100.5,197.5 102.5,203.5 104.5,205.5 106.5,206.5 108.5,195.5 109.5,206.5 112.5,205.5 116.5,201.5 118.5,191.5 119.5,204.5 121.5,198.5 123.5,195.5 124.5,203.5 126.5,180.5 127.5,173.5 127.5,205.5 129.5,206.5 132.5,205.5 134.5,195.5 135.5,205.5 137.5,195.5 139.5,191.5 140.5,186.5 142.5,201.5 144.5,204.5 146.5,192.5 147.5,187.5 149.5,204.5 150.5,195.5 152.5,191.5 154.5,205.5 155.5,198.5 156.5,189.5 158.5,202.5 160.5,203.5 161.5,206.5 162.5,194.5 164.5,187.5 165.5,204.5 166.5,207.5 168.5,202.5 170.5,203.5 172.5,206.5 174.5,208.5 177.5,208.5 179.5,205.5 181.5,206.5 183.5,203.5 185.5,205.5 187.5,203.5 189.5,206.5 192.5,205.5 193.5,197.5 195.5,183.5 196.5,188.5 198.5,197.5 199.5,191.5 201.5,185.5 202.5,183.5 203.5,195.5 205.5,203.5 206.5,204.5 208.5,201.5 210.5,205.5 211.5,195.5 212.5,166.5 213.5,166.5 214.5,152.5 214.5,194.5 215.5,207.5 217.5,204.5 219.5,206.5 221.5,203.5 224.5,207.5 226.5,203.5 229.5,206.5 232.5,203.5 234.5,206.5 237.5,205.5 239.5,206.5 242.5,205.5 245.5,203.5 247.5,206.5 250.5,206.5 251.5,197.5 252.5,185.5 253.5,195.5 255.5,197.5 256.5,205.5 258.5,206.5 260.5,204.5 262.5,197.5 264.5,197.5 265.5,206.5 266.5,205.5 268.5,203.5 270.5,205.5 272.5,197.5 273.5,198.5 275.5,199.5 277.5,205.5 280.5,199.5 282.5,198.5 284.5,199.5 286.5,205.5 287.5,206.5 289.5,197.5 290.5,188.5 290.5,158.5 291.5,144.5 292.5,159.5 292.5,161.5 293.5,190.5 294.5,205.5 296.5,206.5 298.5,203.5 300.5,198.5 301.5,206.5 303.5,198.5 304.5,164.5 306.5,158.5 307.5,176.5 308.5,168.5 309.5,174.5 310.5,179.5 312.5,191.5 313.5,184.5 314.5,197.5 316.5,198.5 317.5,205.5 318.5,197.5 320.5,180.5 321.5,191.5 323.5,175.5 324.5,191.5 325.5,197.5 327.5,205.5 329.5,201.5 330.5,197.5 332.5,204.5 334.5,206.5 336.5,204.5 338.5,194.5 339.5,179.5 340.5,188.5 342.5,203.5 343.5,179.5 344.5,186.5 346.5,175.5 346.5,184.5 348.5,194.5 349.5,201.5 350.5,206.5 352.5,195.5 352.5,189.5 354.5,205.5 355.5,206.5 356.5,194.5 357.5,182.5 358.5,177.5 359.5,186.5 360.5,205.5 361.5,208.5 366.5,208.5 367.5,198.5 368.5,179.5 369.5,167.5 369.5,179.5 370.5,199.5 371.5,208.5 374.5,208.5 375.5,205.5 377.5,190.5 379.5,182.5 380.5,191.5 381.5,206.5 382.5,205.5 383.5,198.5 385.5,190.5 385.5,170.5 386.5,160.5 387.5,186.5 388.5,201.5 390.5,206.5 392.5,204.5 394.5,201.5 396.5,206.5 398.5,203.5 400.5,206.5 401.5,202.5 402.5,197.5 404.5,202.5 405.5,205.5 407.5,205.5 409.5,207.5 411.5,203.5 413.5,201.5 415.5,197.5 416.5,202.5 418.5,206.5 420.5,206.5 422.5,199.5 423.5,194.5 425.5,191.5 426.5,194.5 428.5,190.5 429.5,184.5 430.5,203.5 432.5,206.5 434.5,207.5 436.5,201.5 438.5,197.5 440.5,201.5 441.5,203.5 443.5,206.5 444.5,201.5 446.5,206.5 447.5,199.5 448.5,205.5 450.5,202.5 451.5,204.5 452.5,206.5 454.5,202.5 455.5,195.5 456.5,194.5 458.5,189.5 458.5,195.5 460.5,203.5 462.5,204.5 463.5,199.5 465.5,197.5 466.5,190.5 466.5,168.5 467.5,130.5 468.5,110.5 470.5,160.5 470.5,177.5 472.5,187.5 473.5,202.5 474.5,179.5 474.5,191.5 475.5,202.5 476.5,150.5 476.5,134.5 477.5,117.5 478.5,133.5 479.5,150.5 480.5,186.5 481.5,195.5 482.5,203.5 484.5,206.5 487.5,202.5 488.5,195.5 489.5,186.5 490.5,194.5 492.5,205.5 493.5,198.5 495.5,188.5 496.5,181.5 498.5,197.5 499.5,206.5 502.5,208.5 504.5,204.5 506.5,199.5 507.5,200.5 509.5,198.5 511.5,188.5 512.5,175.5 514.5,184.5 515.5,202.5 516.5,191.5 518.5,190.5 519.5,168.5 520.5,156.5 521.5,183.5 522.5,191.5 523.5,206.5 525.5,201.5 528.5,203.5 530.5,200.5 532.5,205.5 534.5,206.5 536.5,202.5 538.5,206.5 539.5,202.5 540.5,199.5 542.5,193.5 543.5,205.5 544.5,198.5 546.5,193.5 547.5,199.5 549.5,206.5 550.5,199.5 552.5,197.5 554.5,196.5 556.5,199.5 557.5,206.5 558.5,199.5 560.5,199.5 562.5,199.5 564.5,199.5 566.5,206.5 569.5,207.5 570.5,206.5 572.5,199.5 573.5,205.5 575.5,206.5 577.5,203.5 579.5,206.5 581.5,202.5 583.5,205.5 585.5,206.5 587.5,204.5 588.5,195.5 590.5,187.5 590.5,189.5 592.5,195.5 594.5,199.5 595.5,203.5 597.5,206.5 599.5,207.5 601.5,206.5 603.5,203.5 604.5,197.5 606.5,206.5 608.5,206.5 610.5,204.5 612.5,199.5 613.5,197.5 614.5,203.5 616.5,197.5 617.5,204.5 619.5,206.5 620.5,204.5 622.5,202.5 624.5,206.5 626.5,204.5 628.5,206.5 630.5,204.5 632.5,202.5 634.5,204.5 636.5,201.5 638.5,204.5 640.5,197.5 642.5,201.5 644.5,195.5 645.5,206.5 647.5,198.5 648.5,205.5 650.5,197.5 650.5,194.5 652.5,206.5 654.5,206.5 655.5,194.5 657.5,206.5 659.5,206.5 661.5,206.5 663.5,206.5 664.5,201.5 666.5,197.5 668.5,205.5 670.5,202.5 671.5,205.5 673.5,206.5 674.5,204.5 676.5,206.5 678.5,199.5 680.5,199.5 681.5,206.5 684.5,206.5 687.5,207.5 690.5,206.5 693.5,205.5 695.5,202.5 697.5,204.5 700.5,206.5 702.5,205.5 704.5,203.5" fill="none" stroke="#008000" stroke-width="1" shape-rendering="crispEdges"/><polyline points="61,205.5 118,205.5 118,204.5 154,204.5 154,203.5 212,203.5 212,202.5 288,202.5 288,201.5 312,201.5 312,200.5 358,200.5 358,199.5 372,199.5 372,200.5 410,200.5 410,199.5 440,199.5 440,200.5 500,200.5 500,199.5 520,199.5 520,198.5 598,198.5 598,199.5 630,199.5 630,200.5 665,200.5 665,201.5 704,201.5" fill="none" stroke="#0000ff" stroke-width="1"/><rect x="342" y="189" width="2" height="19" fill="#ff0000"/><rect x="513" y="189" width="2" height="19" fill="#ff0000"/><rect x="598" y="89" width="1" height="121" fill="#ff0000"/></svg>
<div style="left:230px;top:231px;width:270px;height:18px;background:transparent;box-shadow:inset 0 0 0 1px #000;"></div>
<div style="left:318px;top:232px;width:1px;height:16px;background:#008080;"></div>
<div style="left:405px;top:232px;width:1px;height:16px;background:#008080;"></div>
<div style="left:235px;top:240px;width:31px;height:1px;background:#008080;"></div>
<div class="t" style="top:234.00px;font-size:12px;line-height:14px;color:#000;font-weight:normal;left:268.67px;transform:scaleX(0.8425);transform-origin:0 0;">RTT</div>
<div style="left:322px;top:240px;width:31px;height:1px;background:#0000ff;"></div>
<div class="t" style="top:234.00px;font-size:12px;line-height:14px;color:#000;font-weight:normal;left:355.65px;transform:scaleX(0.8587);transform-origin:0 0;">Mean RTT</div>
<div style="left:423px;top:238px;width:2px;height:5px;background:#ff0000;"></div>
<div class="t" style="top:234.00px;font-size:12px;line-height:14px;color:#000;font-weight:normal;left:443.97px;transform:scaleX(0.8345);transform-origin:0 0;">Timeout</div>
<div style="left:4px;top:257px;width:722px;height:1px;background:#8c8c8c;"></div>
<div style="left:4px;top:258px;width:722px;height:1px;background:#808080;"></div>
<div style="left:4px;top:259px;width:722px;height:1px;background:#fff;"></div>
<div style="left:271px;top:259px;width:200px;height:228px;background:#fff;"></div>
<div style="left:471px;top:259px;width:254px;height:2px;background:#fff;"></div>
<div style="left:269px;top:260px;width:2px;height:228px;background:#808080;"></div>
<div style="left:272px;top:487px;width:454px;height:1px;background:#808080;"></div>
<div style="left:725px;top:260px;width:1px;height:228px;background:#808080;"></div>
<div class="t" style="top:263.00px;font-size:12px;line-height:14px;color:#003388;font-weight:normal;left:274.98px;transform:scaleX(0.8691);transform-origin:0 0;">Curr. Pos.</div>
<div class="t" style="top:263.00px;font-size:12px;line-height:14px;color:#003388;font-weight:normal;left:350.96px;transform:scaleX(0.9349);transform-origin:0 0;">10/28/02 6:42:56 PM</div>
<div class="t" style="top:280.00px;font-size:12px;line-height:14px;color:#003388;font-weight:normal;left:274.60px;transform:scaleX(0.9057);transform-origin:0 0;">Last Latency</div>
<div class="t" style="top:280.00px;font-size:12px;line-height:14px;color:#003388;font-weight:normal;left:351.41px;transform:scaleX(0.8679);transform-origin:0 0;">30 ms</div>
<div class="t" style="top:297.00px;font-size:12px;line-height:14px;color:#008000;font-weight:normal;left:302.40px;transform:scaleX(0.9178);transform-origin:0 0;">SHADED AREA AVG</div>
<div class="t" style="top:314.00px;font-size:12px;line-height:14px;color:#003388;font-weight:normal;left:275.45px;transform:scaleX(0.8818);transform-origin:0 0;"># samples</div>
<div class="t" style="top:314.00px;font-size:12px;line-height:14px;color:#003388;font-weight:normal;left:351.39px;transform:scaleX(0.9201);transform-origin:0 0;">399</div>
<div class="t" style="top:331.00px;font-size:12px;line-height:14px;color:#003388;font-weight:normal;left:274.97px;transform:scaleX(0.8821);transform-origin:0 0;">&lt;Latency&gt;</div>
<div class="t" style="top:331.00px;font-size:12px;line-height:14px;color:#003388;font-weight:normal;left:351.01px;transform:scaleX(0.8754);transform-origin:0 0;">142 ms</div>
<div class="t" style="top:348.00px;font-size:12px;line-height:14px;color:#003388;font-weight:normal;left:274.98px;transform:scaleX(0.8608);transform-origin:0 0;">&lt;Ping Loss&gt;</div>
<div class="t" style="top:348.00px;font-size:12px;line-height:14px;color:#003388;font-weight:normal;left:351.01px;transform:scaleX(0.8763);transform-origin:0 0;">1.25 %</div>
<div class="t" style="top:365.00px;font-size:12px;line-height:14px;color:#003388;font-weight:normal;left:274.67px;transform:scaleX(0.8887);transform-origin:0 0;">Uptime</div>
<div class="t" style="top:365.00px;font-size:12px;line-height:14px;color:#003388;font-weight:normal;left:351.01px;transform:scaleX(0.8775);transform-origin:0 0;">100.000 %</div>
<div class="t" style="top:382.00px;font-size:12px;line-height:14px;color:#008000;font-weight:normal;left:317.33px;transform:scaleX(0.8774);transform-origin:0 0;">SLA</div>
<div class="t" style="top:399.00px;font-size:12px;line-height:14px;color:#003388;font-weight:normal;left:275.47px;transform:scaleX(0.8993);transform-origin:0 0;">Avg. of</div>
<div class="t" style="top:399.00px;font-size:12px;line-height:14px;color:#003388;font-weight:normal;left:351.56px;transform:scaleX(0.9026);transform-origin:0 0;">4 weeks</div>
<div class="t" style="top:416.00px;font-size:12px;line-height:14px;color:#003388;font-weight:normal;left:275.45px;transform:scaleX(0.8818);transform-origin:0 0;"># samples</div>
<div class="t" style="top:416.00px;font-size:12px;line-height:14px;color:#003388;font-weight:normal;left:351.34px;transform:scaleX(0.9045);transform-origin:0 0;">8186</div>
<div class="t" style="top:433.00px;font-size:12px;line-height:14px;color:#003388;font-weight:normal;left:274.97px;transform:scaleX(0.8821);transform-origin:0 0;">&lt;Latency&gt;</div>
<div class="t" style="top:433.00px;font-size:12px;line-height:14px;color:#003388;font-weight:normal;left:351.31px;transform:scaleX(0.8654);transform-origin:0 0;">95 ms (A: 200 ms)</div>
<div class="t" style="top:450.00px;font-size:12px;line-height:14px;color:#003388;font-weight:normal;left:274.98px;transform:scaleX(0.8608);transform-origin:0 0;">&lt;Ping Loss&gt;</div>
<div class="t" style="top:450.00px;font-size:12px;line-height:14px;color:#003388;font-weight:normal;left:351.28px;transform:scaleX(0.8616);transform-origin:0 0;">2.61 % (A: 10.00 %)</div>
<div class="t" style="top:467.00px;font-size:12px;line-height:14px;color:#ff0000;font-weight:normal;left:274.67px;transform:scaleX(0.8887);transform-origin:0 0;">Uptime</div>
<div class="t" style="top:467.00px;font-size:12px;line-height:14px;color:#ff0000;font-weight:normal;left:351.30px;transform:scaleX(0.8690);transform-origin:0 0;">98.534 % (A: 99.900 %)</div>
<svg style="left:0px;top:0px;" width="730" height="492" viewBox="0 0 730 492"><rect x="276" y="304" width="2" height="1" fill="#008000"/><rect x="279" y="304" width="2" height="1" fill="#008000"/><rect x="282" y="304" width="2" height="1" fill="#008000"/><rect x="285" y="304" width="2" height="1" fill="#008000"/><rect x="288" y="304" width="2" height="1" fill="#008000"/><rect x="291" y="304" width="2" height="1" fill="#008000"/><rect x="294" y="304" width="2" height="1" fill="#008000"/><rect x="297" y="304" width="2" height="1" fill="#008000"/><rect x="409" y="304" width="2" height="1" fill="#008000"/><rect x="412" y="304" width="2" height="1" fill="#008000"/><rect x="415" y="304" width="2" height="1" fill="#008000"/><rect x="418" y="304" width="2" height="1" fill="#008000"/><rect x="421" y="304" width="2" height="1" fill="#008000"/><rect x="424" y="304" width="2" height="1" fill="#008000"/><rect x="427" y="304" width="2" height="1" fill="#008000"/><rect x="430" y="304" width="2" height="1" fill="#008000"/><rect x="433" y="304" width="2" height="1" fill="#008000"/><rect x="436" y="304" width="2" height="1" fill="#008000"/><rect x="439" y="304" width="2" height="1" fill="#008000"/><rect x="442" y="304" width="2" height="1" fill="#008000"/><rect x="445" y="304" width="2" height="1" fill="#008000"/><rect x="276" y="389" width="2" height="1" fill="#008000"/><rect x="279" y="389" width="2" height="1" fill="#008000"/><rect x="282" y="389" width="2" height="1" fill="#008000"/><rect x="285" y="389" width="2" height="1" fill="#008000"/><rect x="288" y="389" width="2" height="1" fill="#008000"/><rect x="291" y="389" width="2" height="1" fill="#008000"/><rect x="294" y="389" width="2" height="1" fill="#008000"/><rect x="297" y="389" width="2" height="1" fill="#008000"/><rect x="300" y="389" width="2" height="1" fill="#008000"/><rect x="303" y="389" width="2" height="1" fill="#008000"/><rect x="306" y="389" width="2" height="1" fill="#008000"/><rect x="309" y="389" width="2" height="1" fill="#008000"/><rect x="312" y="389" width="2" height="1" fill="#008000"/><rect x="352" y="389" width="2" height="1" fill="#008000"/><rect x="355" y="389" width="2" height="1" fill="#008000"/><rect x="358" y="389" width="2" height="1" fill="#008000"/><rect x="361" y="389" width="2" height="1" fill="#008000"/><rect x="364" y="389" width="2" height="1" fill="#008000"/><rect x="368" y="389" width="2" height="1" fill="#008000"/><rect x="371" y="389" width="2" height="1" fill="#008000"/><rect x="374" y="389" width="2" height="1" fill="#008000"/><rect x="377" y="389" width="2" height="1" fill="#008000"/><rect x="380" y="389" width="2" height="1" fill="#008000"/><rect x="383" y="389" width="2" height="1" fill="#008000"/><rect x="386" y="389" width="2" height="1" fill="#008000"/><rect x="389" y="389" width="2" height="1" fill="#008000"/><rect x="392" y="389" width="2" height="1" fill="#008000"/><rect x="396" y="389" width="2" height="1" fill="#008000"/><rect x="399" y="389" width="2" height="1" fill="#008000"/><rect x="402" y="389" width="2" height="1" fill="#008000"/><rect x="405" y="389" width="2" height="1" fill="#008000"/><rect x="408" y="389" width="2" height="1" fill="#008000"/><rect x="411" y="389" width="2" height="1" fill="#008000"/><rect x="414" y="389" width="2" height="1" fill="#008000"/><rect x="417" y="389" width="2" height="1" fill="#008000"/><rect x="420" y="389" width="2" height="1" fill="#008000"/><rect x="423" y="389" width="2" height="1" fill="#008000"/><rect x="427" y="389" width="2" height="1" fill="#008000"/><rect x="430" y="389" width="2" height="1" fill="#008000"/><rect x="433" y="389" width="2" height="1" fill="#008000"/><rect x="436" y="389" width="2" height="1" fill="#008000"/><rect x="439" y="389" width="2" height="1" fill="#008000"/></svg>
<svg style="left:0px;top:0px" width="730" height="492" viewBox="0 0 730 492"><rect x="38" y="290" width="224" height="163" fill="#fff"/><rect x="39" y="291" width="12" height="160" fill="#408080"/><rect x="52" y="383" width="13" height="68" fill="#408080"/><rect x="66" y="425" width="13" height="26" fill="#408080"/><rect x="80" y="442" width="13" height="9" fill="#408080"/><rect x="94" y="443" width="13" height="8" fill="#408080"/><rect x="108" y="448" width="13" height="3" fill="#408080"/><rect x="136" y="449" width="13" height="2" fill="#408080"/><rect x="150" y="450" width="13" height="1" fill="#408080"/><rect x="248" y="448" width="13" height="3" fill="#ff0000"/><rect x="34" y="290" width="228" height="1" fill="#000"/><rect x="261" y="290" width="1" height="163" fill="#000"/><rect x="38" y="290" width="1" height="163" fill="#004848"/><rect x="34" y="452" width="228" height="1" fill="#004848"/><rect x="34" y="452" width="4" height="1" fill="#000"/><rect x="36" y="448" width="2" height="1" fill="#000"/><rect x="36" y="445" width="2" height="1" fill="#000"/><rect x="36" y="441" width="2" height="1" fill="#000"/><rect x="34" y="437" width="4" height="1" fill="#000"/><rect x="36" y="434" width="2" height="1" fill="#000"/><rect x="36" y="430" width="2" height="1" fill="#000"/><rect x="36" y="426" width="2" height="1" fill="#000"/><rect x="34" y="423" width="4" height="1" fill="#000"/><rect x="36" y="419" width="2" height="1" fill="#000"/><rect x="36" y="415" width="2" height="1" fill="#000"/><rect x="36" y="412" width="2" height="1" fill="#000"/><rect x="34" y="408" width="4" height="1" fill="#000"/><rect x="36" y="404" width="2" height="1" fill="#000"/><rect x="36" y="400" width="2" height="1" fill="#000"/><rect x="36" y="397" width="2" height="1" fill="#000"/><rect x="34" y="393" width="4" height="1" fill="#000"/><rect x="36" y="389" width="2" height="1" fill="#000"/><rect x="36" y="386" width="2" height="1" fill="#000"/><rect x="36" y="382" width="2" height="1" fill="#000"/><rect x="34" y="378" width="4" height="1" fill="#000"/><rect x="36" y="375" width="2" height="1" fill="#000"/><rect x="36" y="371" width="2" height="1" fill="#000"/><rect x="36" y="367" width="2" height="1" fill="#000"/><rect x="34" y="364" width="4" height="1" fill="#000"/><rect x="36" y="360" width="2" height="1" fill="#000"/><rect x="36" y="356" width="2" height="1" fill="#000"/><rect x="36" y="353" width="2" height="1" fill="#000"/><rect x="34" y="349" width="4" height="1" fill="#000"/><rect x="36" y="345" width="2" height="1" fill="#000"/><rect x="36" y="342" width="2" height="1" fill="#000"/><rect x="36" y="338" width="2" height="1" fill="#000"/><rect x="34" y="334" width="4" height="1" fill="#000"/><rect x="36" y="330" width="2" height="1" fill="#000"/><rect x="36" y="327" width="2" height="1" fill="#000"/><rect x="36" y="323" width="2" height="1" fill="#000"/><rect x="34" y="319" width="4" height="1" fill="#000"/><rect x="36" y="316" width="2" height="1" fill="#000"/><rect x="36" y="312" width="2" height="1" fill="#000"/><rect x="36" y="308" width="2" height="1" fill="#000"/><rect x="34" y="305" width="4" height="1" fill="#000"/><rect x="36" y="301" width="2" height="1" fill="#000"/><rect x="36" y="297" width="2" height="1" fill="#000"/><rect x="36" y="294" width="2" height="1" fill="#000"/><rect x="34" y="290" width="4" height="1" fill="#000"/><rect x="45" y="453" width="1" height="4" fill="#000"/><rect x="52" y="453" width="1" height="2" fill="#000"/><rect x="59" y="453" width="1" height="2" fill="#000"/><rect x="66" y="453" width="1" height="2" fill="#000"/><rect x="73" y="453" width="1" height="4" fill="#000"/><rect x="80" y="453" width="1" height="2" fill="#000"/><rect x="87" y="453" width="1" height="2" fill="#000"/><rect x="94" y="453" width="1" height="2" fill="#000"/><rect x="101" y="453" width="1" height="4" fill="#000"/><rect x="107" y="453" width="1" height="2" fill="#000"/><rect x="114" y="453" width="1" height="2" fill="#000"/><rect x="121" y="453" width="1" height="2" fill="#000"/><rect x="128" y="453" width="1" height="4" fill="#000"/><rect x="135" y="453" width="1" height="2" fill="#000"/><rect x="142" y="453" width="1" height="2" fill="#000"/><rect x="149" y="453" width="1" height="2" fill="#000"/><rect x="156" y="453" width="1" height="4" fill="#000"/><rect x="163" y="453" width="1" height="2" fill="#000"/><rect x="170" y="453" width="1" height="2" fill="#000"/><rect x="177" y="453" width="1" height="2" fill="#000"/><rect x="184" y="453" width="1" height="4" fill="#000"/><rect x="190" y="453" width="1" height="2" fill="#000"/><rect x="197" y="453" width="1" height="2" fill="#000"/><rect x="204" y="453" width="1" height="2" fill="#000"/><rect x="211" y="453" width="1" height="4" fill="#000"/><rect x="218" y="453" width="1" height="2" fill="#000"/><rect x="225" y="453" width="1" height="2" fill="#000"/><rect x="232" y="453" width="1" height="2" fill="#000"/><rect x="239" y="453" width="1" height="4" fill="#000"/><rect x="246" y="453" width="1" height="2" fill="#000"/><rect x="253" y="453" width="1" height="2" fill="#000"/><rect x="260" y="453" width="1" height="2" fill="#000"/><rect x="493" y="291" width="225" height="161" fill="#fff"/><rect x="494" y="371" width="20" height="79" fill="#408080"/><rect x="516" y="291" width="21" height="159" fill="#408080"/><rect x="489" y="291" width="229" height="1" fill="#000"/><rect x="717" y="291" width="1" height="161" fill="#000"/><rect x="493" y="291" width="1" height="161" fill="#004848"/><rect x="489" y="451" width="229" height="1" fill="#004848"/><rect x="489" y="451" width="4" height="1" fill="#000"/><rect x="491" y="431" width="2" height="1" fill="#000"/><rect x="491" y="411" width="2" height="1" fill="#000"/><rect x="491" y="391" width="2" height="1" fill="#000"/><rect x="489" y="371" width="4" height="1" fill="#000"/><rect x="491" y="351" width="2" height="1" fill="#000"/><rect x="491" y="331" width="2" height="1" fill="#000"/><rect x="491" y="311" width="2" height="1" fill="#000"/><rect x="489" y="291" width="4" height="1" fill="#000"/><rect x="504" y="452" width="1" height="4" fill="#000"/><rect x="527" y="452" width="1" height="4" fill="#000"/><rect x="549" y="452" width="1" height="4" fill="#000"/><rect x="571" y="452" width="1" height="4" fill="#000"/><rect x="594" y="452" width="1" height="4" fill="#000"/><rect x="616" y="452" width="1" height="4" fill="#000"/><rect x="638" y="452" width="1" height="4" fill="#000"/><rect x="661" y="452" width="1" height="4" fill="#000"/><rect x="683" y="452" width="1" height="4" fill="#000"/><rect x="705" y="452" width="1" height="4" fill="#000"/></svg>
<div class="t" style="top:203.00px;font-size:11px;line-height:12px;color:#000;font-weight:normal;left:-344px;width:400px;text-align:right;">0</div>
<div class="t" style="top:188.00px;font-size:11px;line-height:12px;color:#000;font-weight:normal;left:-344px;width:400px;text-align:right;">200</div>
<div class="t" style="top:173.00px;font-size:11px;line-height:12px;color:#000;font-weight:normal;left:-344px;width:400px;text-align:right;">400</div>
<div class="t" style="top:158.00px;font-size:11px;line-height:12px;color:#000;font-weight:normal;left:-344px;width:400px;text-align:right;">600</div>
<div class="t" style="top:144.00px;font-size:11px;line-height:12px;color:#000;font-weight:normal;left:-344px;width:400px;text-align:right;">800</div>
<div class="t" style="top:129.00px;font-size:11px;line-height:12px;color:#000;font-weight:normal;left:-344px;width:400px;text-align:right;">1000</div>
<div class="t" style="top:114.00px;font-size:11px;line-height:12px;color:#000;font-weight:normal;left:-344px;width:400px;text-align:right;">1200</div>
<div class="t" style="top:99.00px;font-size:11px;line-height:12px;color:#000;font-weight:normal;left:-344px;width:400px;text-align:right;">1400</div>
<div class="t" style="top:84.00px;font-size:11px;line-height:12px;color:#000;font-weight:normal;left:-344px;width:400px;text-align:right;">1600</div>
<div class="t" style="top:215.00px;font-size:11px;line-height:12px;color:#000;font-weight:normal;left:-126.6px;width:400px;text-align:center;">10:00</div>
<div class="t" style="top:215.00px;font-size:11px;line-height:12px;color:#000;font-weight:normal;left:-73.03999999999999px;width:400px;text-align:center;">11:00</div>
<div class="t" style="top:215.00px;font-size:11px;line-height:12px;color:#000;font-weight:normal;left:-19.47999999999999px;width:400px;text-align:center;">12:00</div>
<div class="t" style="top:215.00px;font-size:11px;line-height:12px;color:#000;font-weight:normal;left:34.08000000000001px;width:400px;text-align:center;">13:00</div>
<div class="t" style="top:215.00px;font-size:11px;line-height:12px;color:#000;font-weight:normal;left:87.63999999999999px;width:400px;text-align:center;">14:00</div>
<div class="t" style="top:215.00px;font-size:11px;line-height:12px;color:#000;font-weight:normal;left:141.20000000000005px;width:400px;text-align:center;">15:00</div>
<div class="t" style="top:215.00px;font-size:11px;line-height:12px;color:#000;font-weight:normal;left:194.76px;width:400px;text-align:center;">16:00</div>
<div class="t" style="top:215.00px;font-size:11px;line-height:12px;color:#000;font-weight:normal;left:248.32000000000005px;width:400px;text-align:center;">17:00</div>
<div class="t" style="top:215.00px;font-size:11px;line-height:12px;color:#000;font-weight:normal;left:301.88px;width:400px;text-align:center;">18:00</div>
<div class="t" style="top:215.00px;font-size:11px;line-height:12px;color:#000;font-weight:normal;left:355.44000000000005px;width:400px;text-align:center;">19:00</div>
<div class="t" style="top:215.00px;font-size:11px;line-height:12px;color:#000;font-weight:normal;left:409.0px;width:400px;text-align:center;">20:00</div>
<div class="t" style="top:215.00px;font-size:11px;line-height:12px;color:#000;font-weight:normal;left:462.56000000000006px;width:400px;text-align:center;">21:00</div>
<div class="t" style="left:-18.5px;top:142.5px;width:80px;height:16px;line-height:16px;font-size:13.5px;text-align:center;transform:rotate(-90deg);transform-origin:40px 8px;">Latency (ms)</div>
<div class="t" style="top:446.00px;font-size:11px;line-height:12px;color:#000;font-weight:normal;left:-368px;width:400px;text-align:right;">0</div>
<div class="t" style="top:432.00px;font-size:11px;line-height:12px;color:#000;font-weight:normal;left:-368px;width:400px;text-align:right;">20</div>
<div class="t" style="top:417.00px;font-size:11px;line-height:12px;color:#000;font-weight:normal;left:-368px;width:400px;text-align:right;">40</div>
<div class="t" style="top:402.00px;font-size:11px;line-height:12px;color:#000;font-weight:normal;left:-368px;width:400px;text-align:right;">60</div>
<div class="t" style="top:388.00px;font-size:11px;line-height:12px;color:#000;font-weight:normal;left:-368px;width:400px;text-align:right;">80</div>
<div class="t" style="top:373.00px;font-size:11px;line-height:12px;color:#000;font-weight:normal;left:-368px;width:400px;text-align:right;">100</div>
<div class="t" style="top:358.00px;font-size:11px;line-height:12px;color:#000;font-weight:normal;left:-368px;width:400px;text-align:right;">120</div>
<div class="t" style="top:343.00px;font-size:11px;line-height:12px;color:#000;font-weight:normal;left:-368px;width:400px;text-align:right;">140</div>
<div class="t" style="top:329.00px;font-size:11px;line-height:12px;color:#000;font-weight:normal;left:-368px;width:400px;text-align:right;">160</div>
<div class="t" style="top:314.00px;font-size:11px;line-height:12px;color:#000;font-weight:normal;left:-368px;width:400px;text-align:right;">180</div>
<div class="t" style="top:299.00px;font-size:11px;line-height:12px;color:#000;font-weight:normal;left:-368px;width:400px;text-align:right;">200</div>
<div class="t" style="top:284.00px;font-size:11px;line-height:12px;color:#000;font-weight:normal;left:-368px;width:400px;text-align:right;">220</div>
<div class="t" style="top:458.00px;font-size:11px;line-height:12px;color:#000;font-weight:normal;left:-155.7px;width:400px;text-align:center;">100</div>
<div class="t" style="top:458.00px;font-size:11px;line-height:12px;color:#000;font-weight:normal;left:-128.06px;width:400px;text-align:center;">300</div>
<div class="t" style="top:458.00px;font-size:11px;line-height:12px;color:#000;font-weight:normal;left:-100.42000000000002px;width:400px;text-align:center;">500</div>
<div class="t" style="top:458.00px;font-size:11px;line-height:12px;color:#000;font-weight:normal;left:-72.78000000000003px;width:400px;text-align:center;">700</div>
<div class="t" style="top:458.00px;font-size:11px;line-height:12px;color:#000;font-weight:normal;left:-45.140000000000015px;width:400px;text-align:center;">900</div>
<div class="t" style="top:458.00px;font-size:11px;line-height:12px;color:#000;font-weight:normal;left:-17.5px;width:400px;text-align:center;">1100</div>
<div class="t" style="top:458.00px;font-size:11px;line-height:12px;color:#000;font-weight:normal;left:10.139999999999986px;width:400px;text-align:center;">1300</div>
<div class="t" style="top:458.00px;font-size:11px;line-height:12px;color:#000;font-weight:normal;left:37.77999999999997px;width:400px;text-align:center;">1500</div>
<div class="t" style="top:472.00px;font-size:12px;line-height:14px;color:#000;font-weight:normal;left:112.98px;transform:scaleX(1.0288);transform-origin:0 0;">Latency (ms)</div>
<div class="t" style="top:269.00px;font-size:14px;line-height:16px;color:#000;font-weight:bold;left:73.02px;transform:scaleX(0.9314);transform-origin:0 0;">Latency Distribution</div>
<div class="t" style="top:446.00px;font-size:11px;line-height:12px;color:#000;font-weight:normal;left:87px;width:400px;text-align:right;">0</div>
<div class="t" style="top:366.00px;font-size:11px;line-height:12px;color:#000;font-weight:normal;left:87px;width:400px;text-align:right;">1</div>
<div class="t" style="top:286.00px;font-size:11px;line-height:12px;color:#000;font-weight:normal;left:87px;width:400px;text-align:right;">2</div>
<div class="t" style="top:457.00px;font-size:11px;line-height:12px;color:#000;font-weight:normal;left:304.675px;width:400px;text-align:center;">1</div>
<div class="t" style="top:457.00px;font-size:11px;line-height:12px;color:#000;font-weight:normal;left:327.025px;width:400px;text-align:center;">2</div>
<div class="t" style="top:457.00px;font-size:11px;line-height:12px;color:#000;font-weight:normal;left:349.375px;width:400px;text-align:center;">3</div>
<div class="t" style="top:457.00px;font-size:11px;line-height:12px;color:#000;font-weight:normal;left:371.725px;width:400px;text-align:center;">4</div>
<div class="t" style="top:457.00px;font-size:11px;line-height:12px;color:#000;font-weight:normal;left:394.07500000000005px;width:400px;text-align:center;">5</div>
<div class="t" style="top:457.00px;font-size:11px;line-height:12px;color:#000;font-weight:normal;left:416.42499999999995px;width:400px;text-align:center;">6</div>
<div class="t" style="top:457.00px;font-size:11px;line-height:12px;color:#000;font-weight:normal;left:438.775px;width:400px;text-align:center;">7</div>
<div class="t" style="top:457.00px;font-size:11px;line-height:12px;color:#000;font-weight:normal;left:461.125px;width:400px;text-align:center;">8</div>
<div class="t" style="top:457.00px;font-size:11px;line-height:12px;color:#000;font-weight:normal;left:483.475px;width:400px;text-align:center;">9</div>
<div class="t" style="top:457.00px;font-size:11px;line-height:12px;color:#000;font-weight:normal;left:505.82500000000005px;width:400px;text-align:center;">10</div>
<div class="t" style="top:471.00px;font-size:12px;line-height:14px;color:#000;font-weight:normal;left:588.64px;transform:scaleX(1.0727);transform-origin:0 0;">Pings</div>
<div class="t" style="top:270.00px;font-size:14px;line-height:16px;color:#000;font-weight:bold;left:509.83px;transform:scaleX(0.9232);transform-origin:0 0;">Ping Loss Event Distribution</div></body></html>
